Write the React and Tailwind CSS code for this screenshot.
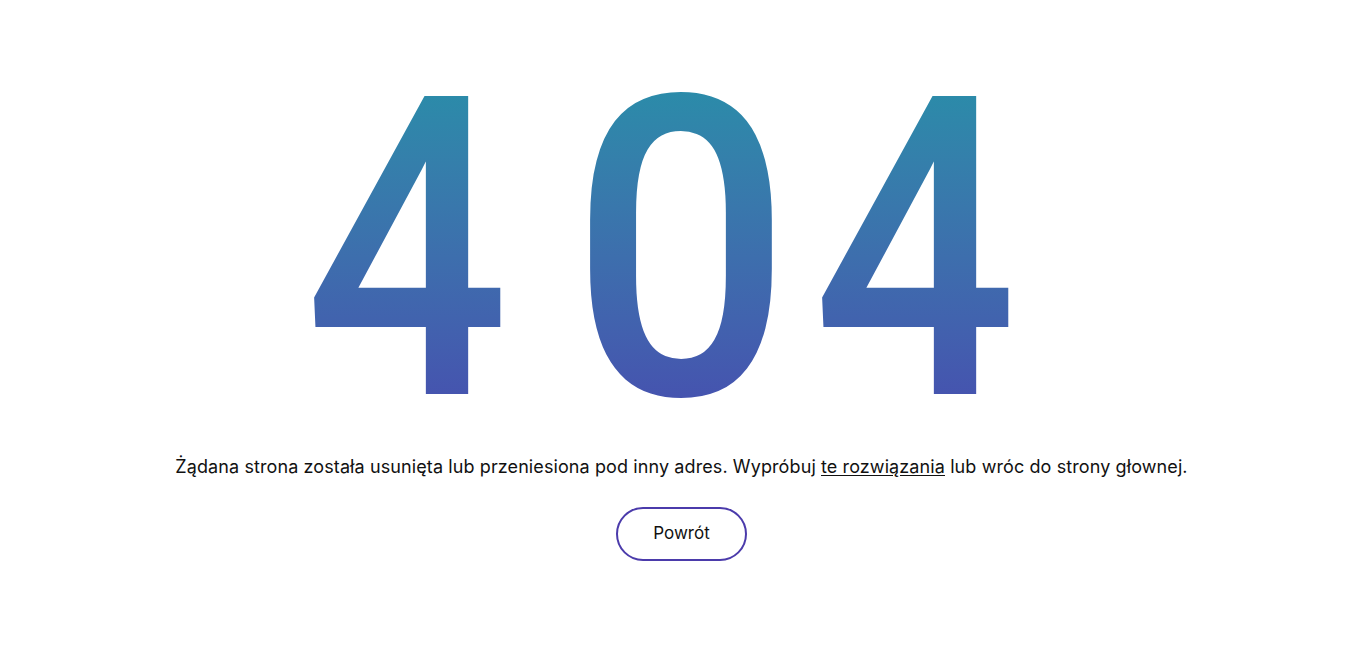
import React from "react";

const digit =
  "inline-block w-[235px] leading-[330px] text-center translate-y-[13px] bg-gradient-to-b from-[#2a8ca9] to-[#4650af] bg-clip-text text-transparent";

function App() {
  return (
    <div className="w-full min-h-screen bg-white flex flex-col items-center font-['Inter',sans-serif] text-[#111]">
      <h1 className="mt-[66px] h-[343px] w-full flex items-center pl-[288px] text-[419px] font-medium font-['Roboto',sans-serif]">
        <span className={`${digit} scale-x-[0.86]`}>4</span>
        <span className={`${digit} scale-x-[0.93] ml-[39px]`}>0</span>
        <span className={`${digit} scale-x-[0.86] -ml-px`}>4</span>
      </h1>

      <p className="mt-[46px] text-[18px] leading-6 text-center tracking-[0.1px]">
        Żądana strona została usunięta lub przeniesiona pod inny adres. Wypróbuj{" "}
        <a href="#" className="underline underline-offset-2">
          te rozwiązania
        </a>{" "}
        lub wróc do strony głownej.
      </p>

      <button className="mt-[28px] w-[131px] h-[54px] rounded-full border-2 border-[#4b3bab] text-[17px] text-[#111] bg-white">
        Powrót
      </button>
    </div>
  );
}

export default App;
